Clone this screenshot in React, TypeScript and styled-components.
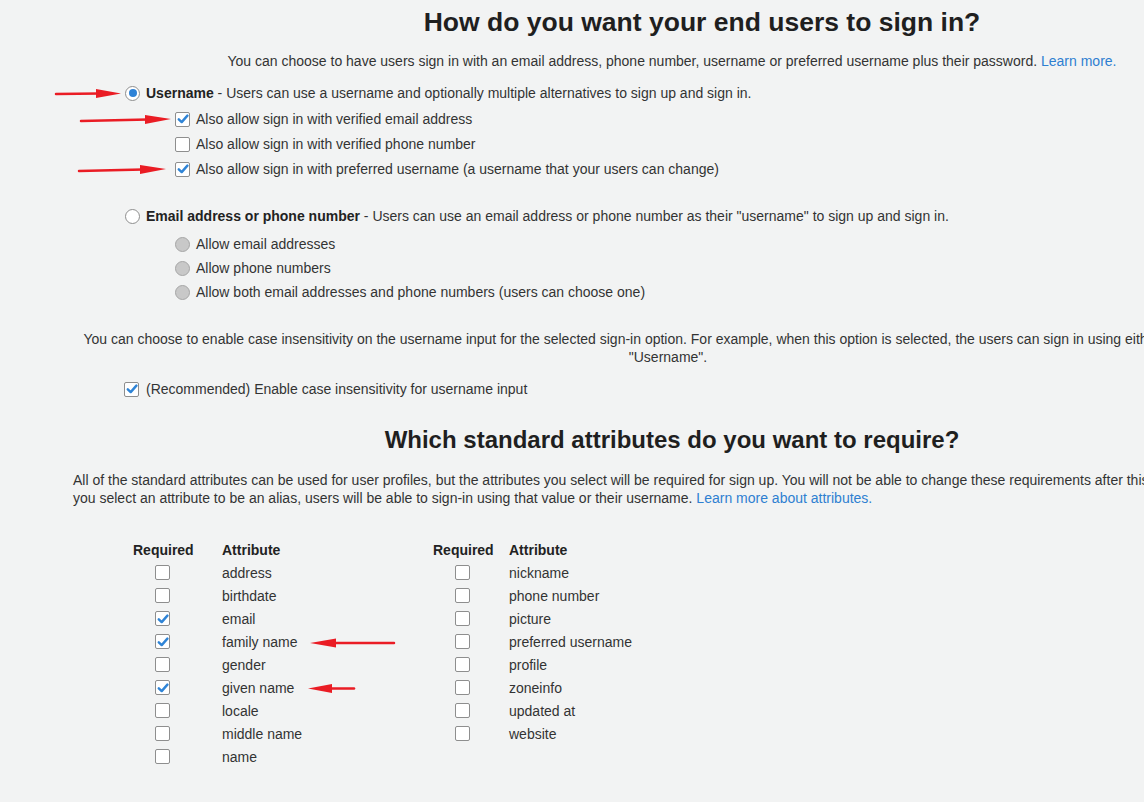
import styled, { createGlobalStyle } from "styled-components";

const GlobalStyle = createGlobalStyle`
  html, body {
    margin: 0;
    padding: 0;
    background: #f2f3f3;
    overflow: hidden;
  }
  body {
    font-family: "Liberation Sans", Arial, Helvetica, sans-serif;
    font-size: 14px;
    color: #333;
  }
`

type Attr = [string, boolean] // name and required

const leftAttrs: Attr[] = [
  ["address", false],
  ["birthdate", false],
  ["email", true],
  ["family name", true],
  ["gender", false],
  ["given name", true],
  ["locale", false],
  ["middle name", false],
  ["name", false],
]

const rightAttrs: Attr[] = [
  ["nickname", false],
  ["phone number", false],
  ["picture", false],
  ["preferred username", false],
  ["profile", false],
  ["zoneinfo", false],
  ["updated at", false],
  ["website", false],
]

function Check({ on }: { on?: boolean }) {
  return (
    <Box>
      {on && (
        <svg width="12" height="12" viewBox="0 0 12 12">
          <path d="M1.8 6.3 L4.7 9.1 L10.4 2.6" fill="none" stroke="#2f84d6" strokeWidth="2.4" strokeLinecap="round" strokeLinejoin="round" />
        </svg>
      )}
    </Box>
  )
}

function AttrTable({ items, firstCol }: { items: Attr[], firstCol: number }) {
  return (
    <Table $first={firstCol}>
      <Th>Required</Th>
      <Th>Attribute</Th>
      {items.map(([name, on]) => (
        <Cell key={name}>
          <CheckCell><Check on={on} /></CheckCell>
          <span>{name}</span>
        </Cell>
      ))}
    </Table>
  )
}

export default function App() {
  return (
    <>
      <GlobalStyle />
      <Page>
        <Heading $shift={60} $size={26.5} $top={7}>How do you want your end users to sign in?</Heading>
        <Intro>
          You can choose to have users sign in with an email address, phone number, username or preferred username plus their password. <Link>Learn more.</Link>
        </Intro>

        <Options>
          <Row>
            <Radio $state="on" />
            <span><b>Username</b> - Users can use a username and optionally multiple alternatives to sign up and sign in.</span>
          </Row>
          <SubList $gap={7}>
            <Row><Check on /><span>Also allow sign in with verified email address</span></Row>
            <Row><Check /><span>Also allow sign in with verified phone number</span></Row>
            <Row><Check on /><span>Also allow sign in with preferred username (a username that your users can change)</span></Row>
          </SubList>

          <Row $top={29}>
            <Radio $state="off" />
            <span><b>Email address or phone number</b> - Users can use an email address or phone number as their "username" to sign up and sign in.</span>
          </Row>
          <SubList $gap={6} $top={10}>
            <Row><Radio $state="disabled" /><span>Allow email addresses</span></Row>
            <Row><Radio $state="disabled" /><span>Allow phone numbers</span></Row>
            <Row><Radio $state="disabled" /><span>Allow both email addresses and phone numbers (users can choose one)</span></Row>
          </SubList>
        </Options>

        <CaseNote>
          You can choose to enable case insensitivity on the username input for the selected sign-in option. For example, when this option is selected, the users can sign in using either "username" or<br />
          "Username".
        </CaseNote>
        <Recommended>
          <Check on />
          <span>(Recommended) Enable case insensitivity for username input</span>
        </Recommended>

        <Heading $top={27}>Which standard attributes do you want to require?</Heading>
        <AttrNote>
          All of the standard attributes can be used for user profiles, but the attributes you select will be required for sign up. You will not be able to change these requirements after this pool is created. If<br />
          you select an attribute to be an alias, users will be able to sign-in using that value or their username. <Link>Learn more about attributes.</Link>
        </AttrNote>

        <Tables>
          <AttrTable items={leftAttrs} firstCol={89} />
          <AttrTable items={rightAttrs} firstCol={76} />
        </Tables>
      </Page>

      <Marks width="1144" height="802" viewBox="0 0 1144 802">
        <g stroke="#ea1c24" strokeWidth="2.5" strokeLinecap="round" fill="#ea1c24">
          <line x1="56" y1="94" x2="100" y2="93.5" />
          <polygon points="96,89 121,93.5 96,98" stroke="none" />
          <line x1="81" y1="121" x2="148" y2="119.5" />
          <polygon points="145,115 171,119 145,124" stroke="none" />
          <line x1="79" y1="171" x2="143" y2="169.5" />
          <polygon points="140,165 166,169 140,174" stroke="none" />
          <line x1="394" y1="643" x2="332" y2="643" />
          <polygon points="336,638.5 310,643 336,647.5" stroke="none" />
          <line x1="354" y1="688.5" x2="328" y2="688.5" />
          <polygon points="332,684 308,688.5 332,693" stroke="none" />
        </g>
      </Marks>
    </>
  )
}

const Page = styled.main`
  width: 1198px;
  padding: 0 0 40px 73px;
  margin: 0;
`
const Heading = styled.h2<{ $shift?: number, $top?: number, $size?: number }>`
  margin: ${p => p.$top ?? 0}px 0 0;
  padding-left: ${p => p.$shift ?? 0}px;
  font-size: ${p => p.$size ?? 24}px;
  line-height: 30px;
  font-weight: bold;
  color: #1f1f1f;
  text-align: center;
`
const Intro = styled.p`
  margin: 15px 0 0;
  line-height: 18px;
  text-align: center;
`
const Link = styled.a`
  color: #2e7fd1;
  cursor: pointer;
`
const Options = styled.div`
  margin: 14px 0 0 52px;
  display: flex;
  flex-direction: column;
`
const Row = styled.label<{ $top?: number }>`
  display: flex;
  align-items: center;
  gap: 6px;
  height: 18px;
  line-height: 18px;
  margin-top: ${p => p.$top ?? 0}px;
  white-space: nowrap;
  b { color: #222; }
`
const SubList = styled.div<{ $gap: number, $top?: number }>`
  display: flex;
  flex-direction: column;
  gap: ${p => p.$gap}px;
  margin: ${p => p.$top ?? 8}px 0 0 50px;
`
const Box = styled.span`
  box-sizing: border-box;
  flex: none;
  width: 15px;
  height: 15px;
  border: 1px solid #8e8e8e;
  border-radius: 2px;
  background: #fff;
  display: inline-flex;
  align-items: center;
  justify-content: center;
`
const Radio = styled.span<{ $state: "on" | "off" | "disabled" }>`
  box-sizing: border-box;
  flex: none;
  width: 15px;
  height: 15px;
  border-radius: 50%;
  border: 1px solid ${p => p.$state === "disabled" ? "#a6a6a6" : "#8e8e8e"};
  background: ${p => p.$state === "disabled" ? "#c8c8c8" : "#fff"};
  position: relative;
  &::after {
    content: "";
    display: ${p => p.$state === "on" ? "block" : "none"};
    position: absolute;
    left: 2.5px;
    top: 2.5px;
    width: 8px;
    height: 8px;
    border-radius: 50%;
    background: #2e82d6;
  }
`
const CaseNote = styled.p`
  margin: 29px 0 0 10px;
  width: 1170px;
  line-height: 18px;
  text-align: center;
  white-space: nowrap;
`
const Recommended = styled.label`
  display: flex;
  align-items: center;
  gap: 7px;
  height: 18px;
  margin: 14px 0 0 51px;
`
const AttrNote = styled.p`
  margin: 16px 0 0;
  line-height: 18px;
  white-space: nowrap;
`
const Tables = styled.div`
  display: flex;
  margin: 31px 0 0 60px;
`
const Table = styled.div<{ $first: number }>`
  display: grid;
  grid-template-columns: ${p => p.$first}px auto;
  grid-auto-rows: 23px;
  align-items: center;
  width: 300px;
`
const Th = styled.div`
  font-weight: bold;
  color: #222;
`
const Cell = styled.div`
  display: contents;
`
const CheckCell = styled.div`
  padding-left: 22px;
  display: flex;
  align-items: center;
`
const Marks = styled.svg`
  position: absolute;
  left: 0;
  top: 0;
  pointer-events: none;
`
